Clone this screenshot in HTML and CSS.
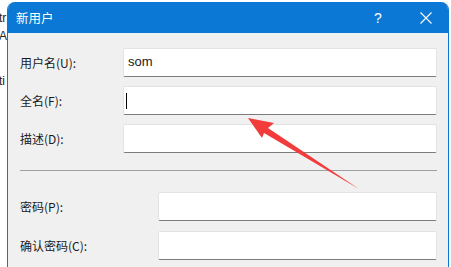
FILE: index.html
```html
<!DOCTYPE html>
<html lang="zh-CN">
<head>
    <meta charset="UTF-8">
    <title>新用户</title>
    <link rel="stylesheet" href="styles.css">
</head>
<body>
    <div class="screen">
        <div class="behind">
            <span class="behind-line l1">tr</span>
            <span class="behind-line l2">Ac</span>
            <span class="behind-line l3">ti</span>
        </div>

        <div class="dialog">
            <div class="titlebar">
                <span class="title">新用户</span>
                <span class="help">?</span>
                <span class="close">
                    <svg viewBox="0 0 12 12" width="12" height="12">
                        <path d="M0.5 0.5L11.5 11.5M11.5 0.5L0.5 11.5" stroke="#ffffff" stroke-width="1.1" fill="none"/>
                    </svg>
                </span>
            </div>

            <div class="content">
                <div class="form-group">
                    <div class="row">
                        <label class="label">用户名(U):</label>
                        <div class="field">som</div>
                    </div>
                    <div class="row">
                        <label class="label">全名(F):</label>
                        <div class="field"><span class="caret"></span></div>
                    </div>
                    <div class="row">
                        <label class="label">描述(D):</label>
                        <div class="field"></div>
                    </div>
                </div>

                <div class="separator"></div>

                <div class="form-group wide">
                    <div class="row">
                        <label class="label">密码(P):</label>
                        <div class="field"></div>
                    </div>
                    <div class="row">
                        <label class="label">确认密码(C):</label>
                        <div class="field"></div>
                    </div>
                </div>
            </div>
        </div>

        <!-- annotation arrow drawn over the form -->
        <svg class="arrow" viewBox="0 0 451 267" width="451" height="267">
            <polygon points="248,118 274,123 268,128 359,189 264,133 262,138" fill="#f23b3b"/>
        </svg>
    </div>
</body>
</html>
```

FILE: styles.css
```css
:root {
    --accent: #0a78d4;
    --dialog-bg: #f0f0f0;
    --field-border: #e3e3e3;
    --field-underline: #7c7c7c;
    --text: #1a1a1a;
}

body {
    margin: 0;
    padding: 0;
    background-color: #ffffff;
    font-family: "Noto Sans CJK SC", "Noto Sans", sans-serif;
    color: var(--text);
    overflow: hidden;
}

.screen {
    position: relative;
    display: flex;
    width: 451px;
    height: 267px;
    overflow: hidden;
}

/* sliver of the window behind the dialog */
.behind {
    display: flex;
    flex-direction: column;
    width: 7px;
    flex-shrink: 0;
    overflow: hidden;
    font-family: "Liberation Sans", sans-serif;
    font-size: 12px;
    color: #222222;
}

.behind-line {
    display: block;
    white-space: nowrap;
    line-height: 14px;
    margin-left: -1px;
}

.l1 {
    margin-top: 11px;
}

.l2 {
    margin-top: 4px;
}

.l3 {
    margin-top: 31px;
}

.dialog {
    width: 440px;
    margin-top: 2px;
    background-color: var(--dialog-bg);
    border-left: 1px solid var(--accent);
    border-right: 1px solid var(--accent);
    border-radius: 8px 8px 0 0;
    overflow: hidden;
}

.titlebar {
    display: flex;
    align-items: center;
    height: 31px;
    background-color: var(--accent);
    color: #ffffff;
    padding-left: 8px;
}

.title {
    flex: 1;
    font-size: 12.5px;
    line-height: 14px;
    margin-top: 1px;
}

.help {
    font-family: "Liberation Sans", sans-serif;
    font-size: 14px;
    width: 12px;
    margin-right: 34px;
}

.close {
    display: flex;
    width: 12px;
    margin-right: 16px;
}

.content {
    padding: 15px 11px 0 12px;
}

.form-group {
    display: flex;
    flex-direction: column;
    gap: 9px;
}

.wide {
    gap: 10px;
}

.row {
    display: flex;
    align-items: center;
}

.label {
    width: 103px;
    flex-shrink: 0;
    font-size: 12px;
    line-height: 14px;
}

.wide .label {
    width: 138px;
}

.field {
    flex: 1;
    height: 27px;
    display: flex;
    align-items: center;
    padding-left: 4px;
    background-color: #ffffff;
    border: 1px solid var(--field-border);
    border-bottom: 1px solid var(--field-underline);
    border-radius: 2px;
    font-family: "Liberation Sans", sans-serif;
    font-size: 13px;
}

.form-group .row:first-child .field {
    padding-bottom: 3px;
    height: 24px;
}

.caret {
    display: block;
    width: 1px;
    height: 16px;
    background-color: #000000;
    margin-left: -2px;
}

.separator {
    height: 1px;
    background-color: #a0a0a0;
    margin: 17px 0 21px 0;
}

.arrow {
    position: absolute;
    left: 0;
    top: 0;
    pointer-events: none;
}
```
